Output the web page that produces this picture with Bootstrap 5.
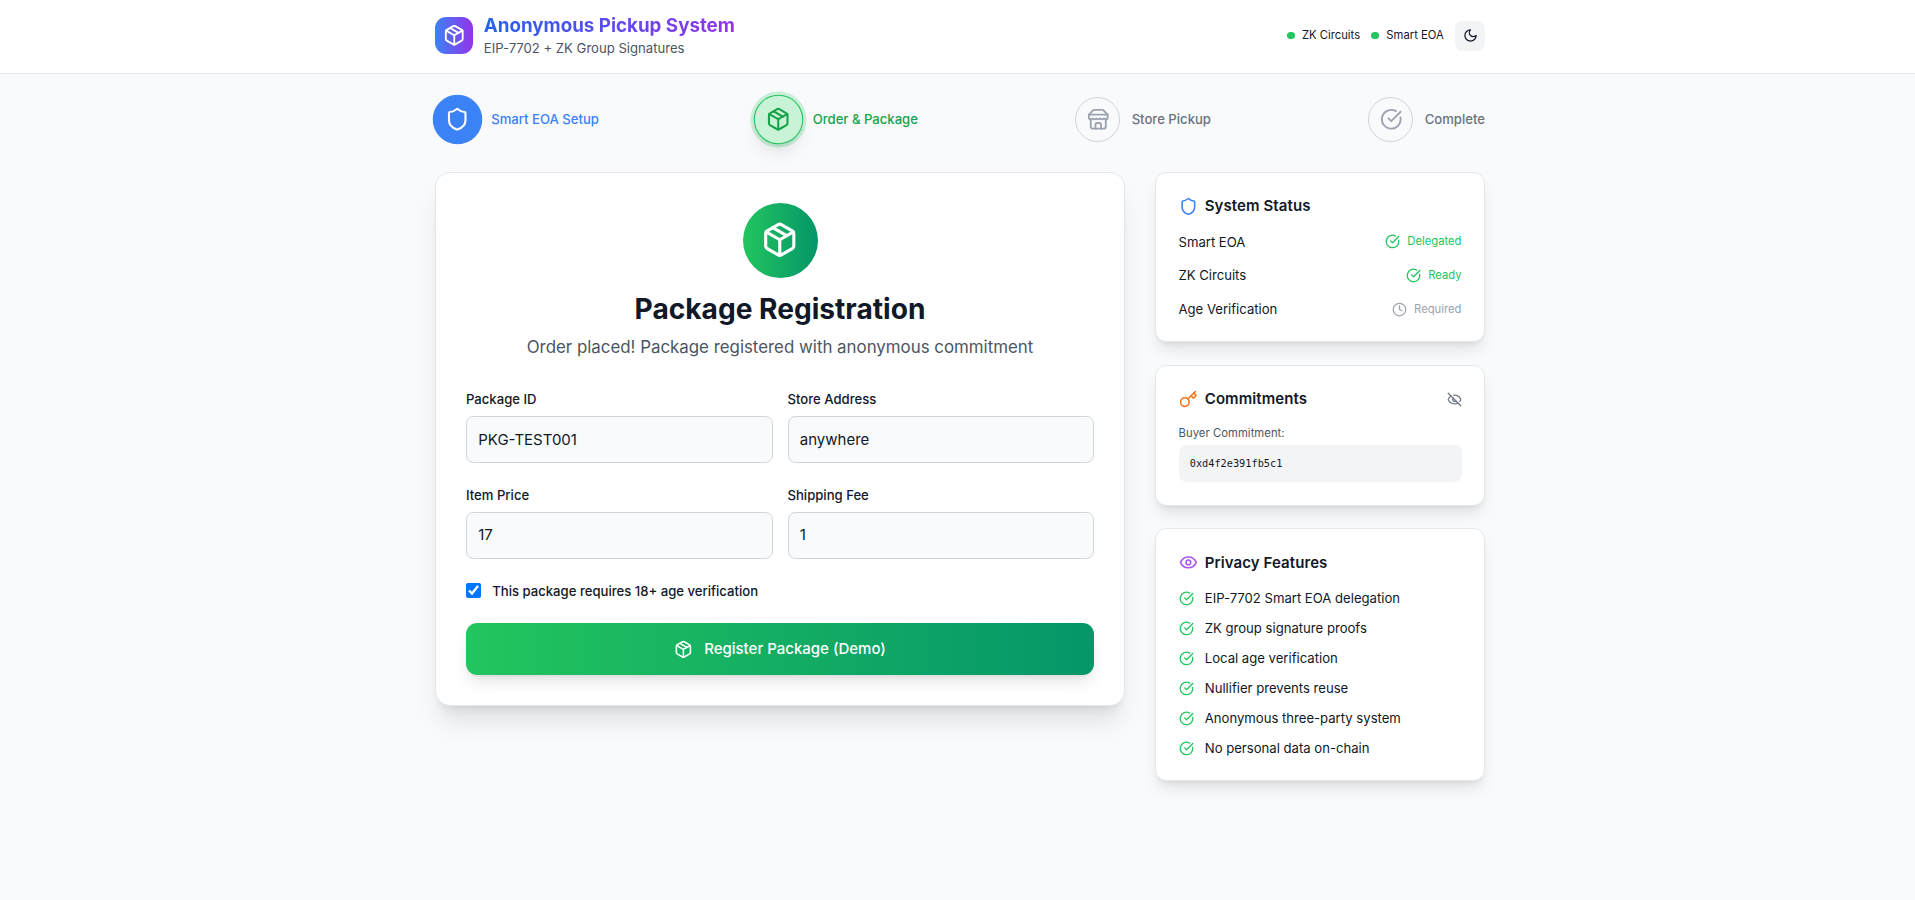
<!DOCTYPE html>
<html lang="en">
<head>
<meta charset="utf-8">
<meta name="viewport" content="width=device-width, initial-scale=1">
<title>Anonymous Pickup System</title>
<link href="https://cdn.jsdelivr.net/npm/bootstrap@5.3.0/dist/css/bootstrap.min.css" rel="stylesheet">
<style>
  html { font-size: 15px; }
  body { font-family: Inter, sans-serif; background: #f9fafb; color: #111827; line-height: 1.5; min-height: 100vh; }
  .shell { width: 1080px; margin-left: 420px; padding: 0 1rem; }
  .ic { width: 1em; height: 1em; fill: none; stroke: currentColor; stroke-width: 2; stroke-linecap: round; stroke-linejoin: round; flex: none; display: block; }
  .t-xs { font-size: .75rem; line-height: 1rem; }
  .t-sm { font-size: .875rem; line-height: 1.25rem; }
  .t-medium { font-weight: 500; }
  .t-muted { color: #4b5563; }
  .c-green { color: #22c55e; }
  .c-gray { color: #9ca3af; }
  .c-blue { color: #3b82f6; }
  .c-orange { color: #f97316; }
  .c-purple { color: #a855f7; }
  .c-slate { color: #6b7280; }
  .gap-12 { gap: .75rem; }
  .gap-24 { gap: 1.5rem; }

  .topbar { background: #fff; border-bottom: 1px solid #e5e7eb; padding: 13px 0 15px; }
  .logo { width: 2.5rem; height: 2.5rem; border-radius: .75rem; background: linear-gradient(to right, #3b82f6, #9333ea); color: #fff; font-size: 1.5rem; }
  .brand-title { font-size: 1.25rem; line-height: 1.75rem; font-weight: 700; background: linear-gradient(to right, #2563eb, #9333ea); -webkit-background-clip: text; background-clip: text; color: transparent; }
  .dot { width: .5rem; height: .5rem; border-radius: 50%; background: #22c55e; }
  .theme-btn { padding: .5rem; border: 0; border-radius: .5rem; background: #f3f4f6; font-size: 1rem; color: #111827; line-height: 1; }

  .steps { padding: 1.5rem 0 2rem; }
  .step-circle { width: 3rem; height: 3rem; border-radius: 50%; border: 1px solid #d1d5db; color: #9ca3af; font-size: 1.5rem; }
  .step-label { font-weight: 500; color: #6b7280; }
  .is-done .step-circle { background: #3b82f6; border-color: #3b82f6; color: #fff; transform: scale(1.1); }
  .is-done .step-label { color: #3b82f6; }
  .is-current .step-circle { background: #c8f3d7; border-color: #22c55e; color: #16a34a; transform: scale(1.1); box-shadow: 0 0 0 3px rgba(34,197,94,.22), 0 10px 15px -3px rgba(0,0,0,.1), 0 4px 6px -4px rgba(0,0,0,.1); }
  .is-current .step-label { color: #16a34a; }

  .layout { display: grid; grid-template-columns: 690px 330px; gap: 2rem; align-items: start; }
  .panel { background: #fff; border: 1px solid #e5e7eb; }
  .panel-main { border-radius: 1rem; padding: 2rem; box-shadow: 0 20px 25px -5px rgba(0,0,0,.1), 0 8px 10px -6px rgba(0,0,0,.1); }
  .panel-side { border-radius: .75rem; padding: 1.5rem; box-shadow: 0 10px 15px -3px rgba(0,0,0,.1), 0 4px 6px -4px rgba(0,0,0,.1); }
  .hero-icon { width: 5rem; height: 5rem; border-radius: 50%; background: linear-gradient(to right, #22c55e, #059669); color: #fff; font-size: 2.5rem; }
  .hero-title { font-size: 1.875rem; line-height: 2.25rem; font-weight: 700; margin: 1rem 0 .5rem; }
  .hero-sub { font-size: 1.125rem; line-height: 1.75rem; margin: 0 0 2rem; }
  .form-grid { display: grid; grid-template-columns: 1fr 1fr; gap: 1.5rem 1rem; }
  .form-grid .form-label { display: block; font-weight: 500; margin-bottom: .5rem; }
  .form-grid .form-control { background: #f9fafb; border: 1px solid #d1d5db; border-radius: .5rem; padding: .75rem; color: #111827; font-size: 1rem; line-height: 1.5; height: 47px; }
  .form-grid .amount { padding-top: 10px; padding-bottom: 12.5px; }
  .age-row { margin: 1.5rem 0; }
  .age-row input { width: 1rem; height: 1rem; margin: 0; accent-color: #0075ff; }
  .btn-register { background: linear-gradient(to right, #22c55e, #059669); color: #fff; border: 0; border-radius: .75rem; padding: 1rem; font-size: 1rem; line-height: 1.5; font-weight: 500; box-shadow: 0 10px 15px -3px rgba(0,0,0,.1), 0 4px 6px -4px rgba(0,0,0,.1); }
  .btn-register:hover { color: #fff; }

  .side-title { font-size: 1rem; line-height: 1.5rem; font-weight: 600; letter-spacing: .09px; margin: 0; }
  .side-head { margin-bottom: 1rem; }
  .ic-md { font-size: 1.25rem; }
  .ic-sm { font-size: 1rem; }
  .hash-label { letter-spacing: .06px; }
  .hash { background: #f3f4f6; border-radius: .5rem; padding: .75rem; margin-top: .25rem; font-family: "DejaVu Sans Mono", monospace; font-size: 10.25px; line-height: 1rem; }
</style>
</head>
<body>
<svg class="d-none" aria-hidden="true">
  <symbol id="package" viewBox="0 0 24 24"><path d="m7.5 4.27 9 5.15"/><path d="M21 8a2 2 0 0 0-1-1.73l-7-4a2 2 0 0 0-2 0l-7 4A2 2 0 0 0 3 8v8a2 2 0 0 0 1 1.73l7 4a2 2 0 0 0 2 0l7-4A2 2 0 0 0 21 16Z"/><path d="m3.3 7 8.7 5 8.7-5"/><path d="M12 22V12"/></symbol>
  <symbol id="shield" viewBox="0 0 24 24"><path d="M20 13c0 5-3.5 7.5-7.66 8.95a1 1 0 0 1-.67-.01C7.5 20.5 4 18 4 13V6a1 1 0 0 1 1-1c2 0 4.5-1.2 6.24-2.72a1.17 1.17 0 0 1 1.52 0C14.51 3.81 17 5 19 5a1 1 0 0 1 1 1z"/></symbol>
  <symbol id="store" viewBox="0 0 24 24"><path d="m2 7 4.41-4.41A2 2 0 0 1 7.83 2h8.34a2 2 0 0 1 1.42.59L22 7"/><path d="M4 12v8a2 2 0 0 0 2 2h12a2 2 0 0 0 2-2v-8"/><path d="M15 22v-4a2 2 0 0 0-2-2h-2a2 2 0 0 0-2 2v4"/><path d="M2 7h20"/><path d="M22 7v3a2 2 0 0 1-2 2a2.7 2.7 0 0 1-1.59-.63.7.7 0 0 0-.82 0A2.7 2.7 0 0 1 16 12a2.7 2.7 0 0 1-1.59-.63.7.7 0 0 0-.82 0A2.7 2.7 0 0 1 12 12a2.7 2.7 0 0 1-1.59-.63.7.7 0 0 0-.82 0A2.7 2.7 0 0 1 8 12a2.7 2.7 0 0 1-1.59-.63.7.7 0 0 0-.82 0A2.7 2.7 0 0 1 4 12a2 2 0 0 1-2-2V7"/></symbol>
  <symbol id="check" viewBox="0 0 24 24"><path d="M21.801 10A10 10 0 1 1 17 3.335"/><path d="m9 11 3 3L22 4"/></symbol>
  <symbol id="clock" viewBox="0 0 24 24"><circle cx="12" cy="12" r="10"/><path d="M12 6v6l4 2"/></symbol>
  <symbol id="moon" viewBox="0 0 24 24"><path d="M12 3a6 6 0 0 0 9 9 9 9 0 1 1-9-9Z"/></symbol>
  <symbol id="key" viewBox="0 0 24 24"><path d="m15.5 7.5 2.3 2.3a1 1 0 0 0 1.4 0l2.1-2.1a1 1 0 0 0 0-1.4L19 4"/><path d="m21 2-9.6 9.6"/><circle cx="7.5" cy="15.5" r="5.5"/></symbol>
  <symbol id="eye" viewBox="0 0 24 24"><path d="M2.062 12.348a1 1 0 0 1 0-.696 10.75 10.75 0 0 1 19.876 0 1 1 0 0 1 0 .696 10.75 10.75 0 0 1-19.876 0"/><circle cx="12" cy="12" r="3"/></symbol>
  <symbol id="eye-off" viewBox="0 0 24 24"><path d="M10.733 5.076a10.744 10.744 0 0 1 11.205 6.575 1 1 0 0 1 0 .696 10.747 10.747 0 0 1-1.444 2.49"/><path d="M14.084 14.158a3 3 0 0 1-4.242-4.242"/><path d="M17.479 17.499a10.75 10.75 0 0 1-15.417-5.151 1 1 0 0 1 0-.696 10.75 10.75 0 0 1 4.446-5.143"/><path d="m2 2 20 20"/></symbol>
</svg>

<header class="topbar">
  <div class="shell d-flex align-items-center justify-content-between">
    <div class="d-flex align-items-center gap-12">
      <div class="logo d-flex align-items-center justify-content-center"><svg class="ic"><use href="#package"/></svg></div>
      <div>
        <div class="brand-title">Anonymous Pickup System</div>
        <div class="t-sm t-muted">EIP-7702 + ZK Group Signatures</div>
      </div>
    </div>
    <div class="d-flex align-items-center gap-12 t-xs">
      <div class="d-flex align-items-center gap-2"><span class="dot"></span><span>ZK Circuits</span></div>
      <div class="d-flex align-items-center gap-2"><span class="dot"></span><span>Smart EOA</span></div>
      <button class="theme-btn" type="button" aria-label="Toggle theme"><svg class="ic"><use href="#moon"/></svg></button>
    </div>
  </div>
</header>

<main class="shell">
  <div class="steps d-flex justify-content-between">
    <div class="is-done d-flex align-items-center gap-12"><div class="step-circle d-flex align-items-center justify-content-center"><svg class="ic"><use href="#shield"/></svg></div><span class="step-label t-sm">Smart EOA Setup</span></div>
    <div class="is-current d-flex align-items-center gap-12"><div class="step-circle d-flex align-items-center justify-content-center"><svg class="ic"><use href="#package"/></svg></div><span class="step-label t-sm">Order &amp; Package</span></div>
    <div class="d-flex align-items-center gap-12"><div class="step-circle d-flex align-items-center justify-content-center"><svg class="ic"><use href="#store"/></svg></div><span class="step-label t-sm">Store Pickup</span></div>
    <div class="d-flex align-items-center gap-12"><div class="step-circle d-flex align-items-center justify-content-center"><svg class="ic"><use href="#check"/></svg></div><span class="step-label t-sm">Complete</span></div>
  </div>

  <div class="layout">
    <section class="panel panel-main">
      <div class="text-center">
        <div class="hero-icon mx-auto d-flex align-items-center justify-content-center"><svg class="ic"><use href="#package"/></svg></div>
        <h2 class="hero-title">Package Registration</h2>
        <p class="hero-sub t-muted">Order placed! Package registered with anonymous commitment</p>
      </div>
      <form>
        <div class="form-grid">
          <div><label class="form-label t-sm" for="pid">Package ID</label><input class="form-control" id="pid" value="PKG-TEST001"></div>
          <div><label class="form-label t-sm" for="store-addr">Store Address</label><input class="form-control" id="store-addr" value="anywhere"></div>
          <div><label class="form-label t-sm" for="price">Item Price</label><input class="form-control amount" id="price" value="17"></div>
          <div><label class="form-label t-sm" for="fee">Shipping Fee</label><input class="form-control amount" id="fee" value="1"></div>
        </div>
        <div class="age-row d-flex align-items-center gap-12">
          <input type="checkbox" id="age" checked>
          <label class="t-sm t-medium" for="age">This package requires 18+ age verification</label>
        </div>
        <button class="btn btn-register w-100 d-flex align-items-center justify-content-center gap-12" type="button"><svg class="ic ic-md"><use href="#package"/></svg><span>Register Package (Demo)</span></button>
      </form>
    </section>

    <aside class="d-flex flex-column gap-24">
      <section class="panel panel-side">
        <div class="side-head d-flex align-items-center gap-2"><svg class="ic ic-md c-blue"><use href="#shield"/></svg><h3 class="side-title">System Status</h3></div>
        <div class="d-flex flex-column gap-3">
          <div class="d-flex align-items-center justify-content-between t-sm"><span>Smart EOA</span><span class="d-flex align-items-center gap-2 c-green"><svg class="ic ic-sm"><use href="#check"/></svg><span class="t-xs">Delegated</span></span></div>
          <div class="d-flex align-items-center justify-content-between t-sm"><span>ZK Circuits</span><span class="d-flex align-items-center gap-2 c-green"><svg class="ic ic-sm"><use href="#check"/></svg><span class="t-xs">Ready</span></span></div>
          <div class="d-flex align-items-center justify-content-between t-sm"><span>Age Verification</span><span class="d-flex align-items-center gap-2 c-gray"><svg class="ic ic-sm"><use href="#clock"/></svg><span class="t-xs">Required</span></span></div>
        </div>
      </section>

      <section class="panel panel-side">
        <div class="side-head d-flex align-items-center justify-content-between">
          <div class="d-flex align-items-center gap-2"><svg class="ic ic-md c-orange"><use href="#key"/></svg><h3 class="side-title">Commitments</h3></div>
          <svg class="ic ic-sm c-slate"><use href="#eye-off"/></svg>
        </div>
        <div class="t-xs t-muted hash-label">Buyer Commitment:</div>
        <div class="hash">0xd4f2e391fb5c1</div>
      </section>

      <section class="panel panel-side">
        <div class="side-head d-flex align-items-center gap-2"><svg class="ic ic-md c-purple"><use href="#eye"/></svg><h3 class="side-title">Privacy Features</h3></div>
        <ul class="list-unstyled d-flex flex-column gap-12 t-sm mb-0">
          <li class="d-flex align-items-center gap-12"><svg class="ic ic-sm c-green"><use href="#check"/></svg>EIP-7702 Smart EOA delegation</li>
          <li class="d-flex align-items-center gap-12"><svg class="ic ic-sm c-green"><use href="#check"/></svg>ZK group signature proofs</li>
          <li class="d-flex align-items-center gap-12"><svg class="ic ic-sm c-green"><use href="#check"/></svg>Local age verification</li>
          <li class="d-flex align-items-center gap-12"><svg class="ic ic-sm c-green"><use href="#check"/></svg>Nullifier prevents reuse</li>
          <li class="d-flex align-items-center gap-12"><svg class="ic ic-sm c-green"><use href="#check"/></svg>Anonymous three-party system</li>
          <li class="d-flex align-items-center gap-12"><svg class="ic ic-sm c-green"><use href="#check"/></svg>No personal data on-chain</li>
        </ul>
      </section>
    </aside>
  </div>
</main>
<script src="https://cdn.jsdelivr.net/npm/bootstrap@5.3.0/dist/js/bootstrap.bundle.min.js"></script>
</body>
</html>
